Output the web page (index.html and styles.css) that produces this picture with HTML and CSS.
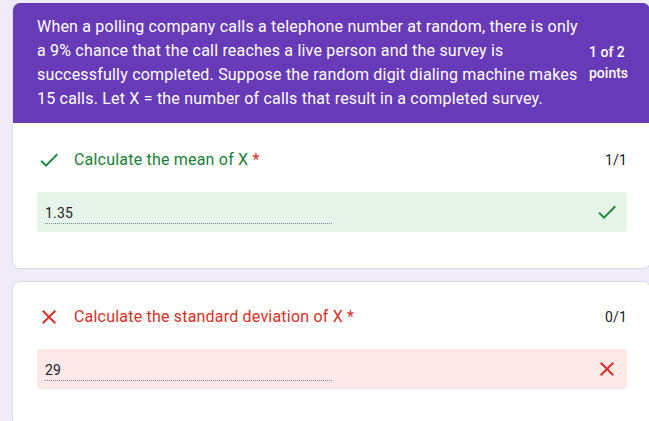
FILE: index.html
```html
<!DOCTYPE html>
<html>
<head>
<meta charset="utf-8">
<link rel="stylesheet" href="styles.css">
</head>
<body>
<div class="page">
  <div class="card first">
    <div class="header">
      <div class="desc">When a polling company calls a telephone number at random, there is only<br>a 9% chance that the call reaches a live person and the survey is<br>successfully completed. Suppose the random digit dialing machine makes<br>15 calls. Let X = the number of calls that result in a completed survey.</div>
      <div class="score">1 of 2 points</div>
    </div>
    <div class="body">
      <div class="qrow">
        <svg class="qicon" viewBox="0 0 24 24"><path d="M9 16.2L4.8 12l-1.4 1.4L9 19 21 7l-1.4-1.4L9 16.2z" fill="#1e8e3e"/></svg>
        <div class="qtitle correct">Calculate the mean of X <span class="req">*</span></div>
        <div class="pts">1/1</div>
      </div>
      <div class="field ok">
        <div class="answer">1.35</div>
        <svg class="ficon" viewBox="0 0 24 24"><path d="M9 16.2L4.8 12l-1.4 1.4L9 19 21 7l-1.4-1.4L9 16.2z" fill="#1e8e3e"/></svg>
      </div>
    </div>
  </div>
  <div class="card second">
    <div class="body">
      <div class="qrow">
        <svg class="qicon" viewBox="0 0 24 24"><path d="M19 6.41L17.59 5 12 10.59 6.41 5 5 6.41 10.59 12 5 17.59 6.41 19 12 13.41 17.59 19 19 17.59 13.41 12z" fill="#d93025"/></svg>
        <div class="qtitle wrong">Calculate the standard deviation of X *</div>
        <div class="pts">0/1</div>
      </div>
      <div class="field bad">
        <div class="answer">29</div>
        <svg class="ficon" viewBox="0 0 24 24"><path d="M19 6.41L17.59 5 12 10.59 6.41 5 5 6.41 10.59 12 5 17.59 6.41 19 12 13.41 17.59 19 19 17.59 13.41 12z" fill="#d93025"/></svg>
      </div>
    </div>
  </div>
</div>
</body>
</html>
```

FILE: styles.css
```css
html, body {
  margin: 0;
  padding: 0;
  background: #f0ebf8;
  overflow: hidden;
  font-family: Roboto, "Noto Sans", Arial, sans-serif;
  color: #202124;
  letter-spacing: 0.2px;
}
.page {
  width: 639px;
  margin: 3px 0 0 12px;
  display: flex;
  flex-direction: column;
  gap: 12px;
}
.card {
  background: #fff;
  border: 1px solid #dadce0;
  border-radius: 8px;
  overflow: hidden;
}
.first {
  border-top: none;
}
.header {
  background: #673ab7;
  color: #fff;
  display: flex;
  align-items: center;
  padding: 12px 23px 12px 24px;
  gap: 12px;
}
.desc {
  font-size: 16px;
  line-height: 24px;
  width: 540px;
  flex: none;
  white-space: nowrap;
}
.score {
  font-size: 14px;
  font-weight: 500;
  line-height: 21px;
  width: 44px;
  letter-spacing: 0;
}
.body {
  padding: 25px 23px 36px 24px;
}
.second .body {
  padding-top: 23px;
}
.qrow {
  display: flex;
  align-items: center;
  height: 24px;
}
.qicon {
  width: 24px;
  height: 24px;
  margin: 0 13px 0 0;
}
.qtitle {
  font-size: 16px;
  line-height: 24px;
  flex: 1;
}
.correct { color: #188038; }
.wrong { color: #d93025; }
.req { color: #d93025; }
.pts {
  font-size: 14px;
  color: #202124;
}
.field {
  margin-top: 20px;
  height: 40px;
  border-radius: 4px;
  display: flex;
  align-items: center;
  justify-content: space-between;
  padding: 0 8px;
}
.ok { background: #e6f4ea; }
.bad { background: #fce8e6; }
.answer {
  width: 287px;
  font-size: 14px;
  line-height: 20px;
  border-bottom: 1px dotted #80868b;
  padding-top: 2px;
}
.ficon {
  width: 24px;
  height: 24px;
  margin-right: 0;
}
```
